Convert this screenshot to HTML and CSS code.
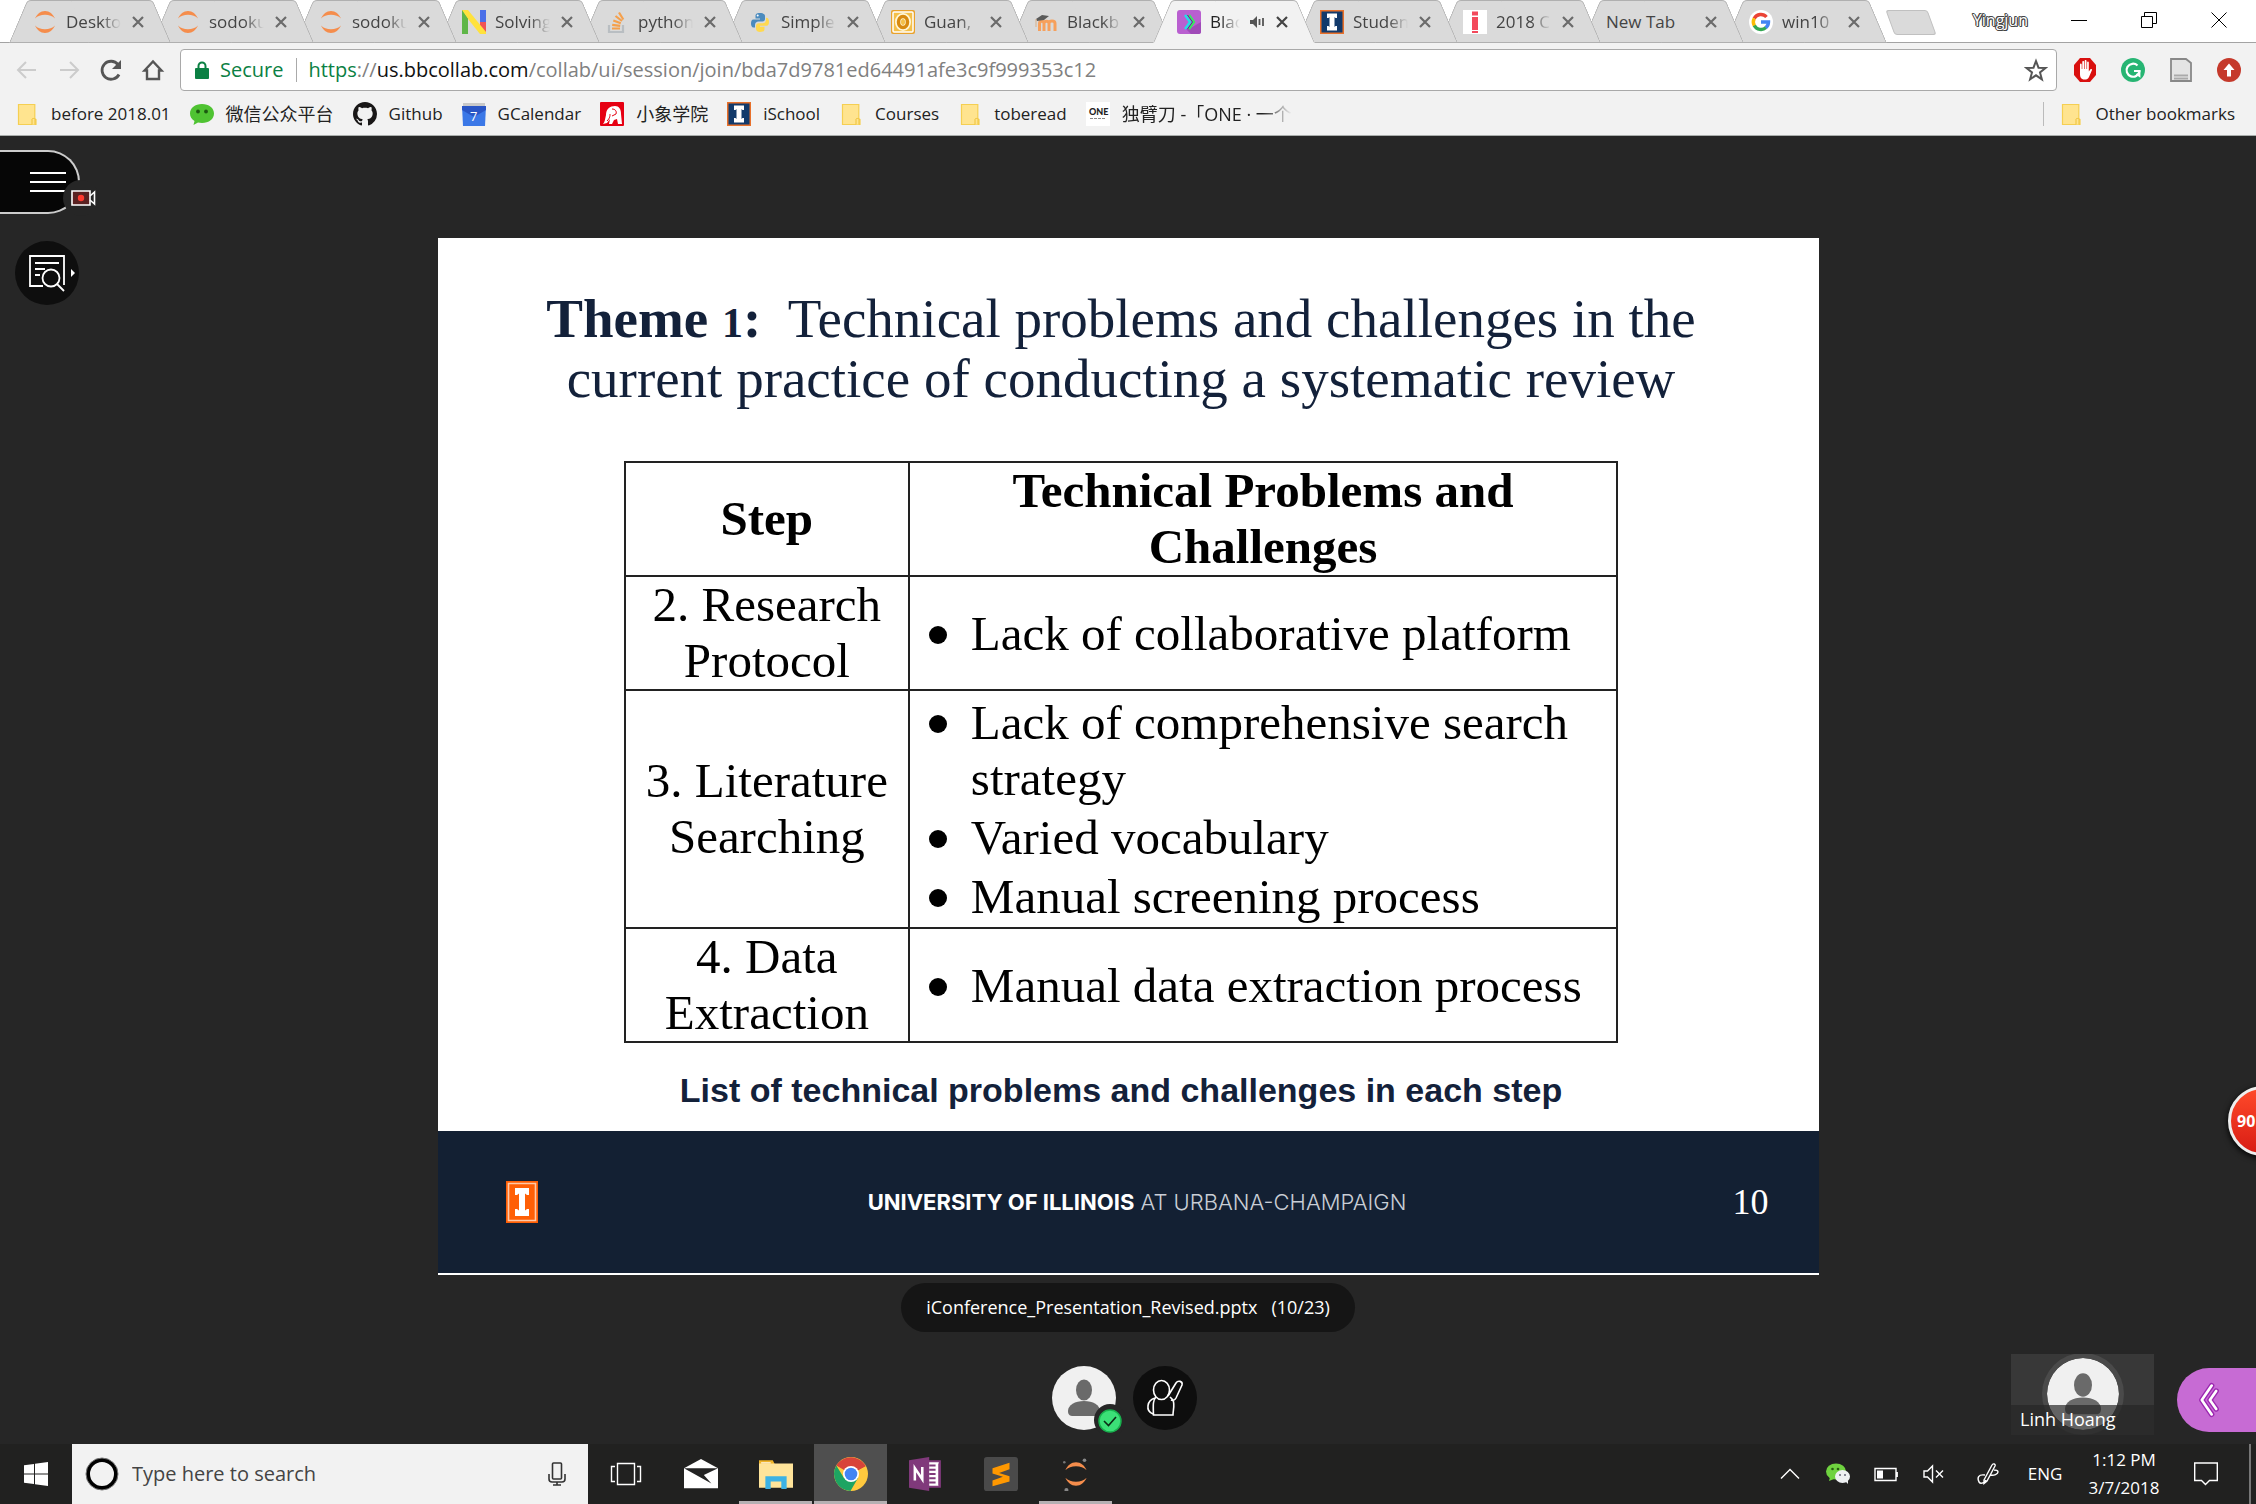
FILE: index.html
```html
<!DOCTYPE html>
<html lang="en">
<head>
<meta charset="utf-8">
<title>Blackboard Collaborate</title>
<link rel="stylesheet" href="styles.css">
</head>
<body>
<svg class="defs" width="0" height="0" aria-hidden="true">
  <symbol id="jupyter" viewBox="0 0 24 24"><path d="M2 8.500C4 4 7.500 1 12 1s8 3 10 7.500C19.500 6 16 4.800 12 4.800S4.500 6 2 8.500zM2 15.500C4 20 7.500 23 12 23s8-3 10-7.500C19.500 18 16 19.200 12 19.200S4.500 18 2 15.500z" fill="#f58d4c"/></symbol>
  <symbol id="illini" viewBox="0 0 24 24"><path fill="#e8702a" d="M0 0h24v24H0z"/><path fill="#123a6b" d="M1.500 1.500h21v21h-21z"/><path fill="#fff" d="M7 3.500h10V8h-1.500l-1-1v10l1-1H17v4.500H7V16h1.500l1 1V7l-1 1H7z"/></symbol>
  <symbol id="folder" viewBox="0 0 24 24"><path d="M3.500 2.500h16.300v14l1.200 1v5H3.500z" fill="#ffe48f" stroke="#f5cf52" stroke-width="1.200"/><path d="M17 22.500v-5.300c0-1 3-1 3 0v5.300" fill="#ffe48f" stroke="#eec239"/></symbol>
  <symbol id="close" viewBox="0 0 16 16"><path d="M3 3l10 10M13 3L3 13" stroke="currentColor" stroke-width="2.200" fill="none"/></symbol>
  <symbol id="person" viewBox="0 0 64 64"><circle cx="32" cy="32" r="32" fill="#f0f0f0"/><ellipse cx="32" cy="24" rx="8" ry="10.500" fill="#6a6a6a"/><path d="M16 45c0-6 7-10 16-10s16 4 16 10c0 4-2 5-5 5H21c-3 0-5-1-5-5z" fill="#6a6a6a"/></symbol>
</svg>

<header class="browser">
  <div class="strip">
    <nav class="tabs" aria-label="Tabs">
      <div class="tab"><svg class="fav"><use href="#jupyter"/></svg><span class="name">Desktop</span><button class="x" aria-label="Close"><svg><use href="#close"/></svg></button></div>
      <div class="tab"><svg class="fav"><use href="#jupyter"/></svg><span class="name">sodoku</span><button class="x" aria-label="Close"><svg><use href="#close"/></svg></button></div>
      <div class="tab"><svg class="fav"><use href="#jupyter"/></svg><span class="name">sodoku</span><button class="x" aria-label="Close"><svg><use href="#close"/></svg></button></div>
      <div class="tab"><svg class="fav" viewBox="0 0 24 24"><path fill="#5fb648" d="M0 0h6v24H0z"/><path fill="#4a6fe8" d="M18 0h6v12h-6z"/><path fill="#f05454" d="M18 12h6v12h-6z"/><path fill="#ffe23d" d="M0 0h6l18 22v2h-6L6 9z"/><path fill="#5fb648" d="M0 1l6 8v15H0z"/></svg><span class="name">Solving</span><button class="x" aria-label="Close"><svg><use href="#close"/></svg></button></div>
      <div class="tab"><svg class="fav" viewBox="0 0 24 24"><path d="M4 15v7h14v-7" fill="none" stroke="#b9bec2" stroke-width="2.200"/><path d="M7 18.500h8M7.200 14.800l8 1M8.300 10.500l7.500 2.700M10.500 6l6.500 5M14 2.500l4.300 7" stroke="#f5a04c" stroke-width="2.200"/></svg><span class="name">python</span><button class="x" aria-label="Close"><svg><use href="#close"/></svg></button></div>
      <div class="tab"><svg class="fav" viewBox="0 0 24 24"><path fill="#4b8bbe" d="M12 3c-4 0-4.500 1.500-4.500 3v2.500H12v1H5.500C3.500 9.500 3 11.500 3 13.500s.8 4 2.500 4H7V15c0-2 1.500-3.500 3.500-3.500h4c1.500 0 2.500-1 2.500-2.500V6c0-2-2-3-5-3z"/><path fill="#ffd94f" d="M12 22c4 0 4.500-1.500 4.500-3v-2.300H12v-1h6.500c2 0 2.500-2 2.500-4s-.8-4-2.500-4H18V10c0 2-1.500 3.300-3.500 3.300h-4C9 13.300 8 14.500 8 16v3c0 2 2 3 4 3z"/><circle cx="9.700" cy="5.600" r="1" fill="#fff"/></svg><span class="name">Simple</span><button class="x" aria-label="Close"><svg><use href="#close"/></svg></button></div>
      <div class="tab"><svg class="fav" viewBox="0 0 24 24"><rect width="24" height="24" rx="2" fill="#e9a22b"/><rect x="2" y="2" width="20" height="20" rx="1" fill="#f4c04a" stroke="#fff" stroke-width="1.500"/><ellipse cx="12" cy="12" rx="5" ry="6" fill="none" stroke="#fff6d8" stroke-width="6"/><ellipse cx="12" cy="12" rx="4.500" ry="5.500" fill="none" stroke="#d88a10" stroke-width="3.500"/></svg><span class="name">Guan,</span><button class="x" aria-label="Close"><svg><use href="#close"/></svg></button></div>
      <div class="tab"><svg class="fav" viewBox="0 0 24 24"><path d="M5.500 21v-7.500c0-3 4.500-3 4.500 0V21M10 13.500c0-3 5-3 5 0V21M15 13.500c0-3.500 6-3.500 6 0V21" stroke="#f6a05c" stroke-width="3" fill="none"/><path d="M2 9l6-4 7 1-5 4-7 1z" fill="#5a5a5a"/><path d="M2 9v8" stroke="#d9b089"/></svg><span class="name">Blackb</span><button class="x" aria-label="Close"><svg><use href="#close"/></svg></button></div>
      <div class="tab active" aria-current="page"><svg class="fav" viewBox="0 0 24 24"><rect width="24" height="24" rx="3" fill="#b95fd0"/><path d="M12 19l12-7v10c0 1-1 2-2 2h-8l-5-5z" fill="#a04bb8"/><path d="M8 5l5 7-5 7" stroke="#1fe0e8" stroke-width="2.400" fill="none"/><path d="M12 5l5 7-5 7" stroke="#39e75f" stroke-width="2.400" fill="none"/><path d="M10.500 5l5 7-5 7" stroke="#5a2f8c" stroke-width="1" fill="none"/></svg><span class="name">Black</span><svg class="audio" viewBox="0 0 16 16"><path d="M1 6h3l4-4v12l-4-4H1z" fill="#555"/><path d="M10.500 5v6M14 4v8" stroke="#555" stroke-width="1.800"/></svg><button class="x" aria-label="Close"><svg><use href="#close"/></svg></button></div>
      <div class="tab"><svg class="fav"><use href="#illini"/></svg><span class="name">Student</span><button class="x" aria-label="Close"><svg><use href="#close"/></svg></button></div>
      <div class="tab"><svg class="fav" viewBox="0 0 24 24"><path fill="#fff" d="M0 0h24v24H0z"/><path fill="#f3495b" d="M9 1.500h6v4H9zM9 7h6v13H9zM9 21h6v2H9z"/></svg><span class="name">2018 Co</span><button class="x" aria-label="Close"><svg><use href="#close"/></svg></button></div>
      <div class="tab"><span class="name wide">New Tab</span><button class="x" aria-label="Close"><svg><use href="#close"/></svg></button></div>
      <div class="tab"><svg class="fav" viewBox="0 0 24 24"><circle cx="12" cy="12" r="12" fill="#fff"/><g fill="none" stroke-width="3.400"><path d="M5.200 8.500A7.500 7.500 0 0 1 17.500 7" stroke="#ea4335"/><path d="M5.400 15.800a7.500 7.500 0 0 1-.1-7.500" stroke="#fbbc05"/><path d="M17 17.500a7.500 7.500 0 0 1-11.700-2" stroke="#34a853"/><path d="M12 12h7.500c0 2.500-1 4.300-2.700 5.700" stroke="#4285f4"/></g></svg><span class="name">win10</span><button class="x" aria-label="Close"><svg><use href="#close"/></svg></button></div>
    </nav>
    <button class="newtab" aria-label="New tab"></button>
    <div class="window">
      <span class="user">Yingjun</span>
      <button aria-label="Minimize"><svg viewBox="0 0 16 16"><path d="M0 8.500h16"/></svg></button>
      <button aria-label="Restore"><svg viewBox="0 0 16 16"><path d="M.5 4.500h11v11H.5zM3.500 4V.5h12v11H12"/></svg></button>
      <button aria-label="Close window"><svg viewBox="0 0 16 16"><path d="M.5.500l15 15M15.500.500l-15 15"/></svg></button>
    </div>
  </div>

  <div class="toolbar">
    <button class="nav dim" aria-label="Back"><svg viewBox="0 0 24 24"><path d="M21 12H4M11 4l-8 8 8 8"/></svg></button>
    <button class="nav dim" aria-label="Forward"><svg viewBox="0 0 24 24"><path d="M3 12h17M13 4l8 8-8 8"/></svg></button>
    <button class="nav" aria-label="Reload"><svg viewBox="0 0 24 24"><path d="M20 16.500A9 9 0 1 1 19 6.500" stroke-width="2.800"/><path d="M22 2v9h-9z" fill="#555" stroke="none"/></svg></button>
    <button class="nav" aria-label="Home"><svg viewBox="0 0 24 24"><path d="M3.500 12.500L12 3.500l8.500 9H18v8.500H6v-8.500z" stroke-width="2.400"/></svg></button>
    <div class="omnibox">
      <svg class="lock" viewBox="0 0 14 18"><rect y="7" width="14" height="11" rx="1" fill="#0b8043"/><path d="M3.500 8V5a3.500 3.500 0 0 1 7 0v3" fill="none" stroke="#0b8043" stroke-width="2"/></svg>
      <span class="secure">Secure</span>
      <a class="url" href="#"><span class="green">https</span>://<b>us.bbcollab.com</b>/collab/ui/session/join/bda7d9781ed64491afe3c9f999353c12</a>
      <button class="star" aria-label="Bookmark this page"><svg viewBox="0 0 24 24"><path d="M12 3l2.500 6.700 7 .3-5.500 4.400 1.900 6.900L12 17.300l-5.900 4 1.900-6.900L2.500 10l7-.3z" fill="none" stroke="#555" stroke-width="2"/></svg></button>
    </div>
    <div class="extensions">
      <button aria-label="Ad blocker"><svg viewBox="0 0 24 24"><path d="M7 0h10l6 7v10l-6 7H7l-6-7V7z" fill="#d9100f"/><path d="M7 13V6.500c0-1.300 1.700-1.300 1.700 0V11h.6V4c0-1.300 1.800-1.300 1.800 0v7h.6V3c0-1.300 1.800-1.300 1.800 0v8h.6V4.500c0-1.300 1.700-1.300 1.700 0v9l1.500-2c1-1 2.200 0 1.500 1L16 19c-1 2-2 2.500-4.500 2.500C8 21.500 7 19 7 16z" fill="#fff"/></svg></button>
      <button aria-label="Grammar"><svg viewBox="0 0 24 24"><circle cx="12" cy="12" r="12" fill="#27b573"/><path d="M16.500 7.500A6.500 6.500 0 1 0 18.500 13H13" fill="none" stroke="#fff" stroke-width="2.200"/><path d="M18.500 13v5l-3-2" fill="none" stroke="#fff" stroke-width="1.800"/></svg></button>
      <button aria-label="Notes"><svg viewBox="0 0 24 24"><path d="M2 1h15l5 4v18H2z" fill="#e4e4e4" stroke="#888" stroke-width="1.800"/><path d="M5 16.500h14v5H5z" fill="#aaa"/><path d="M5 19h14" stroke="#eee"/></svg></button>
      <button aria-label="Update"><svg viewBox="0 0 24 24"><circle cx="12" cy="12" r="12" fill="#c5392b"/><path d="M12 5.500l5.500 6.500H14v6.500h-4V12H6.500z" fill="#fff"/></svg></button>
    </div>
  </div>

  <nav class="bookmarks" aria-label="Bookmarks">
    <a href="#"><svg><use href="#folder"/></svg><span>before 2018.01</span></a>
    <a href="#"><svg viewBox="0 0 24 24"><path d="M12 2c7 0 12 4 12 9.500S19 21 12 21c-1.500 0-2.800-.2-4-.5L3.500 23l1-4C1.500 17 0 14.500 0 11.500 0 6 5 2 12 2z" fill="#4fc332"/><circle cx="8" cy="9.500" r="1.900" fill="#1c5a10"/><circle cx="16" cy="9.500" r="1.900" fill="#1c5a10"/></svg><span class="cjk">微信公众平台</span></a>
    <a href="#"><svg viewBox="0 0 16 16"><path fill="#191717" d="M8 0C3.580 0 0 3.580 0 8c0 3.540 2.290 6.530 5.470 7.590.4.070.550-.170.550-.380 0-.190-.010-.820-.010-1.490-2.010.370-2.530-.490-2.690-.940-.090-.230-.480-.940-.820-1.130-.280-.150-.680-.520-.010-.530.630-.010 1.080.580 1.230.820.720 1.210 1.870.870 2.330.660.070-.520.280-.870.510-1.070-1.780-.2-3.640-.890-3.640-3.950 0-.870.310-1.590.820-2.150-.080-.2-.360-1.020.080-2.120 0 0 .670-.210 2.200.820.640-.180 1.320-.270 2-.270s1.360.090 2 .270c1.530-1.040 2.200-.820 2.200-.820.440 1.100.160 1.920.080 2.120.510.560.820 1.270.820 2.150 0 3.070-1.870 3.750-3.650 3.950.290.250.540.730.540 1.480 0 1.070-.010 1.930-.010 2.200 0 .210.150.460.550.380A8.010 8.010 0 0 0 16 8c0-4.420-3.580-8-8-8z"/></svg><span>Github</span></a>
    <a href="#"><svg viewBox="0 0 24 24"><path d="M1 1h22v4H1z" fill="#c9c9c9"/><path d="M0 4h24l-1 20H1z" fill="#3b78e7"/><path d="M0 4h24v4l-12 7L0 8z" fill="#2a56c6"/><text x="8" y="19" font-family="Open Sans" font-size="13" fill="#fff">7</text></svg><span>GCalendar</span></a>
    <a href="#"><svg viewBox="0 0 24 24"><rect width="24" height="24" rx="1" fill="#e60012"/><path d="M3 22c2-2 2-5 3-9 0-6 4-9 9-9 4 0 6 3 6 8l1 10h-4l-1-5-3 1-2 4H9l1-5-3 4z" fill="#fff"/><path d="M12 7c3 0 5 2 4 5l-4 2M10 12c0 2 0 4-3 7" fill="none" stroke="#e60012" stroke-width="1"/></svg><span class="cjk">小象学院</span></a>
    <a href="#"><svg><use href="#illini"/></svg><span>iSchool</span></a>
    <a href="#"><svg><use href="#folder"/></svg><span>Courses</span></a>
    <a href="#"><svg><use href="#folder"/></svg><span>toberead</span></a>
    <a href="#"><svg viewBox="0 0 24 24"><path fill="#fff" d="M0 0h24v24H0z"/><text x="3" y="13" font-family="Lato" font-weight="900" font-size="9" fill="#222">ONE</text><path d="M4 16.500h16" stroke="#888" stroke-dasharray="3 1"/></svg><span class="cjk fade">独臂刀 -「ONE · 一个</span></a>
    <a class="other" href="#"><svg><use href="#folder"/></svg><span>Other bookmarks</span></a>
  </nav>
</header>

<main class="stage">
  <aside class="left">
    <button class="menu" aria-label="Open session menu">
      <svg class="bars" viewBox="0 0 36 20"><path d="M0 1h36M0 10h36M0 19h36" stroke="#fff" stroke-width="2"/></svg>
      <svg class="rec" viewBox="0 0 36 36"><circle cx="18" cy="18" r="18" fill="#262626"/><path d="M9 11h18v14H9z" fill="#5a2222" stroke="#fff" stroke-width="1.600"/><circle cx="18" cy="18" r="3.200" fill="#ff3b30"/><path d="M27 16l4.500-4v12L27 20" fill="none" stroke="#fff" stroke-width="1.600"/></svg>
    </button>
    <button class="round finder" aria-label="View controls"><svg viewBox="0 0 64 64" fill="none" stroke="#fff" stroke-width="1.800"><path d="M28 45H15V15h34v29M20 22h24M20 28h10M20 34h5"/><circle cx="36" cy="37" r="8.500"/><path d="M42 43l7 7"/><path d="M56 28l4 4-4 4z" fill="#fff" stroke="none"/></svg></button>
  </aside>

  <section class="center">
    <article class="slide">
      <h1><b>Theme <small>1</small>:</b>&nbsp; Technical problems and challenges in the<br>current practice of conducting a systematic review</h1>
      <table>
        <thead><tr><th class="step">Step</th><th>Technical Problems and<br>Challenges</th></tr></thead>
        <tbody>
          <tr><td class="step">2. Research<br>Protocol</td><td><ul><li>Lack of collaborative platform</li></ul></td></tr>
          <tr><td class="step">3. Literature<br>Searching</td><td><ul><li>Lack of comprehensive search<br>strategy</li><li>Varied vocabulary</li><li>Manual screening process</li></ul></td></tr>
          <tr><td class="step">4. Data<br>Extraction</td><td><ul><li>Manual data extraction process</li></ul></td></tr>
        </tbody>
      </table>
      <p class="caption">List of technical problems and challenges in each step</p>
      <footer>
        <svg class="logo" viewBox="0 0 32 42"><path fill="#ff5f05" d="M0 0h32v42H0z"/><path fill="none" stroke="#ffc9a8" stroke-width="1.600" d="M2.500 2.500h27v37h-27z"/><path fill="#fff" d="M9 7h14v7h-2l-2-1.500v17l2-1.500h2v7H9v-7h2l2 1.500v-17L11 14H9z"/></svg>
        <p class="school"><b>UNIVERSITY OF ILLINOIS</b> AT URBANA-CHAMPAIGN</p>
        <span class="page">10</span>
      </footer>
    </article>
    <p class="file"><span>iConference_Presentation_Revised.pptx</span><span>(10/23)</span></p>
    <div class="controls">
      <button class="round me" aria-label="My status"><svg><use href="#person"/></svg><svg class="ok" viewBox="0 0 32 32"><circle cx="16" cy="16" r="16" fill="#262626"/><circle cx="16" cy="17" r="11" fill="#3be077" stroke="#18b04d" stroke-width="1.500"/><path d="M10 17l4.500 4.500L22 13" fill="none" stroke="#0b2b16" stroke-width="1.600"/></svg></button>
      <button class="round" aria-label="Raise hand"><svg viewBox="0 0 64 64" fill="none" stroke="#fff" stroke-width="1.600"><ellipse cx="28.500" cy="24" rx="8" ry="9.500"/><path d="M23 31c-3 3-3 7-2.500 18h19.500c0-5 2-10 0-15l-3-3M35 30l8-13c2-3 7-2 6 2l-6 13c-1 2-3 3-5 2M22 32c-8 2-10 13-2 16"/></svg></button>
    </div>
  </section>

  <aside class="right">
    <button class="ball" aria-label="Memory use">90</button>
    <div class="dock">
      <figure class="speaker"><svg><use href="#person"/></svg><figcaption>Linh Hoang</figcaption></figure>
      <button class="expand" aria-label="Open Collaborate panel"><svg viewBox="0 0 24 40" fill="none" stroke-linecap="round" stroke-linejoin="round"><path d="M15 4L4 20l11 16M20 10l-7 10 7 10" stroke="#9c27b0" stroke-width="6"/><path d="M15 4L4 20l11 16M20 10l-7 10 7 10" stroke="#fff" stroke-width="3"/></svg></button>
    </div>
  </aside>
</main>

<footer class="taskbar">
  <button class="start" aria-label="Start"><svg viewBox="0 0 24 24"><path fill="#fff" d="M0 3.300l10-1.400v9.500H0zM11 1.800L24 0v11.400H11zM0 12.500h10v9.600L0 20.700zM11 12.500h13V24l-13-1.800z"/></svg></button>
  <label class="search">
    <svg class="cortana" viewBox="0 0 34 34"><circle cx="17" cy="17" r="14" fill="none" stroke="#000" stroke-width="4"/><circle cx="17" cy="17" r="16" fill="none" stroke="#777" stroke-width="1"/></svg>
    <input type="text" placeholder="Type here to search" aria-label="Type here to search">
    <svg class="mic" viewBox="0 0 18 24" fill="none" stroke="#333" stroke-width="1.600"><rect x="4.500" y="1" width="9" height="16" rx="1"/><path d="M1 12v5c0 2 1 3 3 3h10c2 0 3-1 3-3v-5M9 20v3M5 23h8"/></svg>
  </label>
  <div class="apps">
    <button aria-label="Task view"><svg viewBox="0 0 34 34" fill="none" stroke="#fff" stroke-width="1.400"><path d="M8.500 6.500h17v21h-17zM6 9.500H2.500v15H6M28 9.500h3.500v15H28"/></svg></button>
    <button aria-label="Mail"><svg viewBox="0 0 36 32"><path fill="#fff" d="M0 10L18 0l18 10v21H0z"/><path d="M0 10h36L21 17l8 9z" fill="#232323"/></svg></button>
    <button class="open" aria-label="File Explorer"><svg viewBox="0 0 32 32"><path d="M0 3h13l2 4H0z" fill="#f0b429"/><path d="M0 6h32v23H0z" fill="#ffe49a"/><path d="M2 5h9v1H2z" fill="#fff"/><path d="M6 30V18h20v12h-5v-7H11v7z" fill="#3db2e4"/></svg></button>
    <button class="open current" aria-label="Chrome"><svg viewBox="0 0 34 34"><circle cx="17" cy="17" r="17" fill="#ffc93e"/><path d="M17 17L2.300 8.500A17 17 0 0 1 31.700 9z" fill="#d8443a"/><path d="M31.700 9H17v8z" fill="#d8443a"/><path d="M2.300 8.500A17 17 0 0 0 16.500 34L24 21 17 17l-7 4z" fill="#1da462"/><circle cx="17" cy="17" r="8" fill="#fff"/><circle cx="17" cy="17" r="6.300" fill="#4285f4"/></svg></button>
    <button aria-label="OneNote"><svg viewBox="0 0 32 32"><path d="M17 4h12v24H17z" fill="#fff" stroke="#80397b" stroke-width="2"/><path d="M19 8h6M19 12h6M19 16h6M19 20h6M19 24h6M28.500 6v21" stroke="#80397b" stroke-width="1.800"/><path d="M0 3l19-3v32L0 29z" fill="#80397b"/><path d="M5.500 22V10.500L12.500 21V9.500" stroke="#fff" stroke-width="2.400" fill="none"/></svg></button>
    <button aria-label="Sublime Text"><svg viewBox="0 0 36 36"><rect width="36" height="36" rx="3" fill="#4a4a4a"/><path d="M9 12l18-6v7l-11 4 11 3.500V26L9 31v-6l11-4-11-3.500z" fill="#ff9800"/></svg></button>
    <button class="open" aria-label="Jupyter"><svg viewBox="-4 -4 32 32"><use href="#jupyter" width="24" height="24"/><circle cx="20" cy="-1" r="1.700" fill="#888"/><circle cx="3" cy="27" r="1.900" fill="#888"/><circle cx="1" cy="1" r="1.200" fill="#777"/></svg></button>
  </div>
  <div class="tray">
    <button aria-label="Show hidden icons"><svg viewBox="0 0 24 24"><path d="M3 16.500l9-9 9 9"/></svg></button>
    <button aria-label="WeChat"><svg viewBox="0 0 24 24" class="solid"><ellipse cx="10" cy="9.500" rx="10" ry="8" fill="#6fd33f"/><path d="M4 15l-1 4 5-2z" fill="#6fd33f"/><ellipse cx="16.500" cy="14.500" rx="7.500" ry="6.500" fill="#eef0f2"/><path d="M19 19l3 3v-4z" fill="#eef0f2"/><circle cx="6.500" cy="7" r="1.300" fill="#265c10"/><circle cx="12" cy="7" r="1.300" fill="#265c10"/><circle cx="14" cy="13" r="1" fill="#667"/><circle cx="19" cy="13" r="1" fill="#667"/></svg></button>
    <button aria-label="Battery"><svg viewBox="0 0 24 24"><path d="M1 6.500h21v12H1zM23.200 10v5"/><path d="M3 8.500h6v8H3z" fill="#fff" stroke="none"/></svg></button>
    <button aria-label="Volume muted"><svg viewBox="0 0 24 24"><path d="M2 9h3.500l5-5v16l-5-5H2zM14 8.500l7 7M21 8.500l-7 7"/></svg></button>
    <button class="pen" aria-label="Windows Ink"><svg viewBox="0 0 24 24"><path d="M8 18l8-15c1-2 4-1 3 1l-8 15-3 2.500zM9 13c-7-1-8 3-6 7 2 3 6 0 7-2M14 13c4 1 8-1 8-3s-2-2-4-2"/></svg></button>
    <button class="lang">ENG</button>
    <button class="clock"><time>1:12 PM</time><time>3/7/2018</time></button>
    <button class="notes" aria-label="Notifications"><svg viewBox="0 0 24 24"><path d="M.7 1h22.600v17.500H15.500L11.500 22.500l-4-4H.7z"/></svg></button>
  </div>
</footer>
</body>
</html>
```

FILE: styles.css
```css
* { box-sizing: border-box; }

body {
  margin: 0;
  min-height: 100vh;
  display: flex;
  flex-direction: column;
  background: #262626;
  color: #222;
  font-family: "Open Sans", "Noto Sans CJK SC", sans-serif;
  font-size: 17px;
  line-height: 24px;
}

h1, p, ul, figure { margin: 0; padding: 0; }

button {
  display: flex;
  align-items: center;
  justify-content: center;
  padding: 0;
  border: 0;
  background: none;
  color: inherit;
  font: inherit;
}

svg { display: block; flex: none; }
.defs { position: absolute; }
a { color: inherit; text-decoration: none; }

/* Browser frame */
.browser {
  background: #f2f2f2;
  border-bottom: 1px solid #a9adab;
}

.strip {
  display: flex;
  height: 43px;
  padding-left: 9px;
  background: #fff;
  box-shadow: inset 0 -1px #a3a3a3;
}

.tabs {
  display: flex;
  flex: 0 1 1859px;
  min-width: 0;
  isolation: isolate;
}

.tab {
  position: relative;
  display: flex;
  flex: 1 1 0;
  min-width: 0;
  align-items: center;
  gap: 9px;
  margin-right: -18px;
  padding: 0 24px;
  color: #444;
}

.tab::before,
.tab::after {
  content: "";
  position: absolute;
  z-index: -1;
  top: 0;
  bottom: 0;
  width: 50%;
  background: #dadada;
  border: 1px solid #b0b0b0;
}

.tab::before {
  left: 0;
  border-right: 0;
  border-top-left-radius: 4px;
  transform: skewX(-23deg);
  transform-origin: bottom left;
}

.tab::after {
  right: 0;
  border-left: 0;
  border-top-right-radius: 4px;
  transform: skewX(23deg);
  transform-origin: bottom right;
}

.tab:nth-child(1) { z-index: 13; }
.tab:nth-child(2) { z-index: 12; }
.tab:nth-child(3) { z-index: 11; }
.tab:nth-child(4) { z-index: 10; }
.tab:nth-child(5) { z-index: 9; }
.tab:nth-child(6) { z-index: 8; }
.tab:nth-child(7) { z-index: 7; }
.tab:nth-child(8) { z-index: 6; }
.tab:nth-child(9) { z-index: 14; }
.tab:nth-child(10) { z-index: 5; }
.tab:nth-child(11) { z-index: 4; }
.tab:nth-child(12) { z-index: 3; }
.tab:nth-child(13) { z-index: 2; }

.tab.active { color: #222; }
.tab.active::before,
.tab.active::after { background: #f2f2f2; border-bottom-color: #f2f2f2; }

.fav { width: 24px; height: 24px; }

.name {
  flex: 1;
  min-width: 0;
  overflow: hidden;
  white-space: nowrap;
  mask-image: linear-gradient(to right, #000 calc(100% - 20px), transparent);
}

.name.wide { mask-image: none; }
.audio { width: 16px; height: 16px; }
.x, .x svg { width: 16px; height: 16px; color: #6b6b6b; }
.active .x svg { color: #444; }

.newtab {
  align-self: flex-start;
  width: 42px;
  height: 25px;
  margin: 10px 0 0 22px;
  background: #dadada;
  border: 1px solid #c0c0c0;
  border-radius: 3px;
  transform: skewX(20deg);
}

.window {
  display: flex;
  align-items: center;
  align-self: flex-start;
  height: 40px;
  margin-left: auto;
  padding-right: 2px;
}

.user {
  margin-right: 16px;
  color: #fff;
  font-size: 16px;
  line-height: 40px;
  text-shadow: 1px 0 #444, -1px 0 #444, 0 1px #444, 0 -1px #444, 1px 1px #444, -1px -1px #444;
}

.window button { width: 70px; height: 40px; }
.window svg { width: 16px; height: 16px; fill: none; stroke: #000; stroke-width: 1; }

.toolbar {
  display: flex;
  align-items: center;
  padding: 6px 3px 4px 6px;
}

.nav { width: 42px; height: 42px; }
.nav svg { width: 24px; height: 24px; fill: none; stroke: #555; stroke-width: 2; }
.nav.dim svg { stroke: #ccc; }

.omnibox {
  display: flex;
  flex: 1;
  min-width: 0;
  align-items: center;
  height: 42px;
  margin: 0 4px 0 6px;
  padding: 0 8px 0 14px;
  background: #fff;
  border: 1px solid #a9a9a9;
  border-radius: 4px;
  font-size: 20px;
}

.lock { width: 14px; height: 18px; }
.secure {
  margin-left: 11px;
  padding-right: 13px;
  border-right: 1px solid #aaa;
  color: #0b8043;
}
.url {
  flex: 1;
  min-width: 0;
  margin-left: 11px;
  overflow: hidden;
  white-space: nowrap;
  color: #808080;
}
.url b { color: #111; font-weight: 400; }
.green { color: #0b8043; }
.star, .star svg { width: 24px; height: 24px; }

.extensions { display: flex; }
.extensions button { width: 48px; height: 42px; }
.extensions svg { width: 24px; height: 24px; }

.bookmarks {
  display: flex;
  align-items: center;
  gap: 19px;
  height: 40px;
  padding: 0 21px 3px 15px;
  color: #222;
  white-space: nowrap;
}

.bookmarks a { display: flex; align-items: center; gap: 12px; }
.bookmarks svg { width: 24px; height: 24px; }
.cjk { font-size: 18px; }
.fade { mask-image: linear-gradient(to right, #000 calc(100% - 30px), transparent); }
.other { margin-left: auto; padding-left: 15px; border-left: 1px solid #bbb; }

/* Session area */
.stage {
  display: grid;
  flex: 1 0 auto;
  grid-template-columns: 1fr minmax(0, 1381px) 1fr;
  overflow: hidden;
}

.left {
  display: flex;
  flex-direction: column;
  align-items: flex-start;
  gap: 27px;
  padding-top: 14px;
}

.menu {
  position: relative;
  justify-content: flex-start;
  width: 80px;
  height: 64px;
  padding-left: 30px;
  background: #060606;
  border: 2px solid #ccc;
  border-left: 0;
  border-radius: 0 32px 32px 0;
}
.bars { width: 36px; height: 20px; }
.rec { position: absolute; right: -21px; bottom: -4px; width: 36px; height: 36px; }

.round {
  position: relative;
  width: 64px;
  height: 64px;
  border-radius: 50%;
  background: #0e0e0e;
}
.round svg { width: 64px; height: 64px; }
.finder { margin-left: 15px; }

.center {
  display: flex;
  flex-direction: column;
  align-items: center;
  padding: 102px 0 8px;
}

.slide {
  width: 100%;
  background: #fff;
  border-bottom: 2px solid #fff;
  text-align: center;
}

.slide h1 {
  padding: 51px 14px 0 0;
  color: #13213a;
  font-family: "Liberation Serif", serif;
  font-size: 55px;
  font-weight: 400;
  line-height: 60px;
}
.slide small { font-size: 42px; line-height: 1; }

.slide table {
  width: 72%;
  margin: 52px auto 0;
  position: relative;
  left: -7px;
  border-collapse: collapse;
  color: #000;
  font-family: "Liberation Serif", serif;
  font-size: 49px;
  line-height: 56px;
}

.slide th, .slide td { padding: 0; border: 2px solid #222; }
.slide .step { width: 284px; }
.slide ul {
  display: flex;
  flex-direction: column;
  gap: 3px;
  padding: 4px 0 2px 19px;
  list-style: none;
  text-align: left;
}
.slide li { position: relative; padding-left: 42px; }
.slide li::before {
  content: "";
  position: absolute;
  left: 0;
  top: 20px;
  width: 18px;
  height: 18px;
  border-radius: 50%;
  background: #000;
}

.caption {
  padding: 27px 14px 21px 0;
  color: #13213a;
  font-family: "Liberation Sans", sans-serif;
  font-size: 34px;
  font-weight: 700;
  line-height: 40px;
}

.slide footer {
  display: grid;
  grid-template-columns: 1fr auto 1fr;
  align-items: center;
  height: 142px;
  padding: 0 50px 0 68px;
  background: #132033;
  color: #fff;
}
.logo { width: 32px; height: 42px; }
.school { color: #c9ced6; font-family: Inter, sans-serif; font-size: 22px; font-weight: 300; }
.school b { color: #fff; font-weight: 700; }
.page { justify-self: end; font-family: "Liberation Serif", serif; font-size: 36px; }

.file {
  display: flex;
  gap: 14px;
  margin-top: 8px;
  padding: 12px 25px 13px;
  border-radius: 25px;
  background: #151515;
  color: #fff;
  font-size: 18px;
}

.controls { display: flex; gap: 17px; margin-top: 34px; padding-right: 7px; }
.round .ok { position: absolute; right: -10px; bottom: -6px; width: 32px; height: 32px; }

.right {
  display: flex;
  flex-direction: column;
  align-items: flex-end;
  justify-content: flex-end;
  padding-bottom: 9px;
}

.ball {
  justify-content: flex-start;
  width: 70px;
  height: 70px;
  margin: 0 -42px 198px 0;
  padding-left: 6px;
  border: 3px solid #eee;
  border-radius: 50%;
  background: linear-gradient(#ff4a2a, #d81c14);
  box-shadow: 0 2px 6px #000;
  color: #fff;
  font-size: 16px;
  font-weight: 700;
}

.dock { display: flex; align-items: flex-end; gap: 23px; }

.speaker {
  position: relative;
  display: flex;
  justify-content: center;
  width: 143px;
  height: 81px;
  padding-top: 4px;
  overflow: hidden;
  background: #383838;
}
.speaker svg { width: 72px; height: 72px; border-radius: 50%; box-shadow: 0 0 0 5px #4a4a4a; }
.speaker figcaption {
  position: absolute;
  inset: auto 0 0;
  height: 30px;
  padding-left: 9px;
  background: rgba(38, 38, 38, .7);
  color: #fff;
  font-size: 18px;
  line-height: 28px;
}

.expand {
  justify-content: flex-start;
  width: 79px;
  height: 64px;
  margin-bottom: 3px;
  padding-left: 20px;
  border-radius: 32px 0 0 32px;
  background: #c76bd4;
}
.expand svg { width: 24px; height: 36px; }

/* Taskbar */
.taskbar {
  display: flex;
  flex: none;
  height: 60px;
  background: #212120;
  color: #fff;
}

.start { width: 72px; }
.start svg { width: 24px; height: 24px; }

.search {
  display: flex;
  flex: 0 1 516px;
  align-items: center;
  padding: 0 22px 0 13px;
  background: #f2f2f2;
}
.cortana { width: 34px; height: 34px; }
.search input {
  flex: 1;
  min-width: 0;
  margin-left: 13px;
  padding: 0;
  border: 0;
  background: none;
  font: inherit;
  font-size: 20px;
}
.search input::placeholder { color: #444; opacity: 1; }
.mic { width: 18px; height: 26px; }

.apps { display: flex; gap: 2px; padding-left: 1px; }
.apps button { width: 73px; border: solid transparent; border-width: 3px 0; }
.apps svg { width: 34px; height: 34px; }
.apps .open { border-bottom-color: #b5b0b3; }
.apps .current { background: #4f4f4f; }

.tray {
  display: flex;
  align-items: center;
  margin: 0 5px 0 auto;
  padding-right: 13px;
  border-right: 2px solid #777;
}
.tray button { width: 48px; height: 60px; }
.tray svg { width: 24px; height: 24px; fill: none; stroke: #fff; stroke-width: 1.4; }
.tray svg.solid { stroke: none; }
.tray .pen { width: 60px; }
.tray .lang { width: 54px; }
.tray .clock { flex-direction: column; width: 104px; line-height: 28px; }
.tray .notes { width: 60px; }
```
